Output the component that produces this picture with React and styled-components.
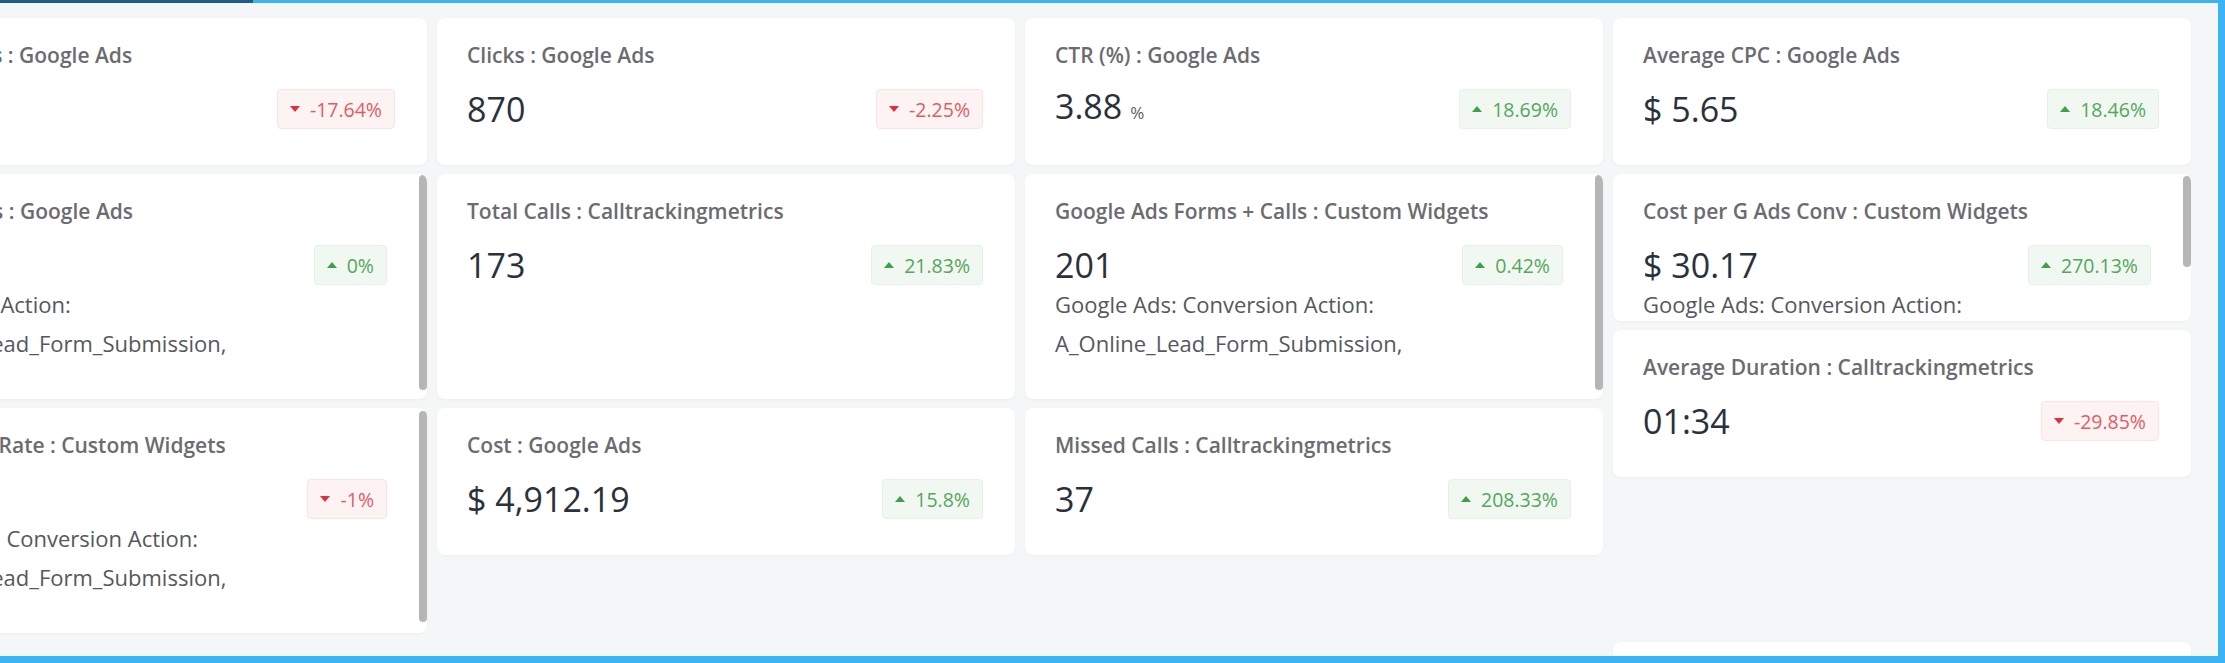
import styled, { createGlobalStyle } from "styled-components";

const GlobalStyle = createGlobalStyle`
  html, body {
    margin: 0;
    padding: 0;
    background: #f4f6f8;
  }
  body {
    font-family: "Open Sans", "Noto Sans", sans-serif;
  }
`;

const Page = styled.div`
  display: flex;
  flex-direction: column;
  width: 2225px;
  height: 663px;
  overflow: hidden;
`;

const TopStrip = styled.div`
  display: flex;
  height: 3px;
  flex-shrink: 0;
`;

const ActiveSegment = styled.div`
  width: 253px;
  background: #1f5c88;
`;

const RestSegment = styled.div`
  flex: 1;
  background: #3ab4f5;
`;

const Body = styled.div`
  flex: 1;
  min-height: 0;
  overflow: hidden;
  background: #f4f6f8;
  border-right: 7px solid #3ab4f5;
  border-bottom: 7px solid #3ab4f5;
`;

const Grid = styled.div`
  display: grid;
  grid-template-columns: repeat(4, 578px);
  grid-auto-rows: 69px;
  column-gap: 10px;
  row-gap: 9px;
  margin-left: -151px;
  padding-top: 15px;
`;

const Card = styled.div`
  grid-column: ${(p) => p.$col};
  grid-row: ${(p) => p.$row} / span ${(p) => p.$span};
  display: flex;
  background: #ffffff;
  border-radius: 8px;
  box-shadow: 0 1px 3px rgba(30, 40, 60, 0.04);
  overflow: hidden;
`;

const Content = styled.div`
  flex: 1;
  min-width: 0;
  padding: 23px 32px 0 30px;
`;

const ScrollTrack = styled.div`
  width: 8px;
  flex-shrink: 0;
  padding-top: ${(p) => p.$offset}px;
`;

const Thumb = styled.div`
  height: ${(p) => p.$size}px;
  background: #b6b6b6;
  border-radius: 4px;
`;

const Title = styled.div`
  font-size: 21px;
  line-height: 28px;
  font-weight: 600;
  color: #6a6c70;
  white-space: nowrap;
`;

const ValueRow = styled.div`
  display: flex;
  align-items: center;
  justify-content: space-between;
  height: 40px;
  margin-top: 20px;
`;

const Value = styled.div`
  font-size: 34px;
  line-height: 40px;
  color: #2b313b;
  white-space: nowrap;
`;

const Unit = styled.span`
  font-size: 17px;
  color: #5a5d62;
  margin-left: 8px;
`;

const Badge = styled.div`
  display: inline-flex;
  align-items: center;
  gap: 10px;
  height: 40px;
  padding: 0 12px;
  box-sizing: border-box;
  border-radius: 4px;
  font-size: 19.5px;
  white-space: nowrap;
  border: 1px solid ${(p) => (p.$up ? "#e4f1e4" : "#fae3e3")};
  background: ${(p) => (p.$up ? "#f1f8f1" : "#fdf3f3")};
  color: ${(p) => (p.$up ? "#55a65e" : "#df5d66")};
`;

const Desc = styled.div`
  font-size: 22px;
  line-height: 39px;
  color: #55585d;
  white-space: nowrap;
`;

const Caret = ({ up }) => (
  <svg width="10" height="6" viewBox="0 0 10 6">
    {up ? (
      <polygon points="0,6 5,0 10,6" fill="#3f9f4a" />
    ) : (
      <polygon points="0,0 10,0 5,6" fill="#e0303b" />
    )}
  </svg>
);

const widgets = [
  { col: 1, row: 1, span: 2, title: "Impressions : Google Ads", value: "42,318", change: "-17.64%", up: false },
  {
    col: 1, row: 3, span: 3, title: "Conversions : Google Ads", value: "28", change: "0%", up: true,
    desc: ["Conversion Action:", "A_Online_Lead_Form_Submission,"], scroll: { offset: 1, size: 215 },
  },
  {
    col: 1, row: 6, span: 3, title: "Conversion Rate : Custom Widgets", value: "3.22 %", change: "-1%", up: false,
    desc: ["Google Ads: Conversion Action:", "A_Online_Lead_Form_Submission,"], scroll: { offset: 3, size: 211 },
  },
  { col: 2, row: 1, span: 2, title: "Clicks : Google Ads", value: "870", change: "-2.25%", up: false },
  { col: 2, row: 3, span: 3, title: "Total Calls : Calltrackingmetrics", value: "173", change: "21.83%", up: true },
  { col: 2, row: 6, span: 2, title: "Cost : Google Ads", value: "$ 4,912.19", change: "15.8%", up: true },
  { col: 3, row: 1, span: 2, title: "CTR (%) : Google Ads", value: "3.88", unit: "%", change: "18.69%", up: true },
  {
    col: 3, row: 3, span: 3, title: "Google Ads Forms + Calls : Custom Widgets", value: "201", change: "0.42%", up: true,
    desc: ["Google Ads: Conversion Action:", "A_Online_Lead_Form_Submission,"], scroll: { offset: 1, size: 215 },
  },
  { col: 3, row: 6, span: 2, title: "Missed Calls : Calltrackingmetrics", value: "37", change: "208.33%", up: true },
  { col: 4, row: 1, span: 2, title: "Average CPC : Google Ads", value: "$ 5.65", change: "18.46%", up: true },
  {
    col: 4, row: 3, span: 2, title: "Cost per G Ads Conv : Custom Widgets", value: "$ 30.17", change: "270.13%", up: true,
    desc: ["Google Ads: Conversion Action:", "A_Online_Lead_Form_Submission,"], scroll: { offset: 2, size: 91 },
  },
  { col: 4, row: 5, span: 2, title: "Average Duration : Calltrackingmetrics", value: "01:34", change: "-29.85%", up: false },
  { col: 4, row: 9, span: 2, title: "Answered Calls : Calltrackingmetrics", value: "136", change: "4.62%", up: true },
];

function Widget({ w }) {
  return (
    <Card $col={w.col} $row={w.row} $span={w.span}>
      <Content>
        <Title>{w.title}</Title>
        <ValueRow>
          <Value>
            {w.value}
            {w.unit && <Unit>{w.unit}</Unit>}
          </Value>
          <Badge $up={w.up}>
            <Caret up={w.up} />
            {w.change}
          </Badge>
        </ValueRow>
        {w.desc && (
          <Desc>
            {w.desc.map((line) => (
              <div key={line}>{line}</div>
            ))}
          </Desc>
        )}
      </Content>
      {w.scroll && (
        <ScrollTrack $offset={w.scroll.offset}>
          <Thumb $size={w.scroll.size} />
        </ScrollTrack>
      )}
    </Card>
  );
}

export default function App() {
  return (
    <>
      <GlobalStyle />
      <Page>
        <TopStrip>
          <ActiveSegment />
          <RestSegment />
        </TopStrip>
        <Body>
          <Grid>
            {widgets.map((w) => (
              <Widget key={w.title} w={w} />
            ))}
          </Grid>
        </Body>
      </Page>
    </>
  );
}
